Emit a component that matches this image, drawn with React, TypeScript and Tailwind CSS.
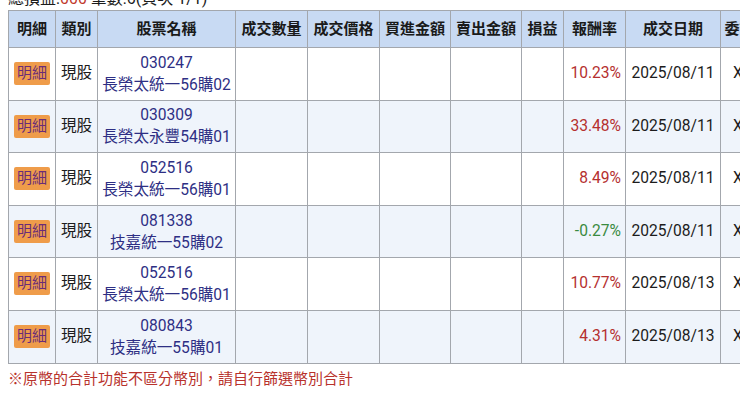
import React from 'react';

interface TradeRow {
  code: string;
  name: string;
  rate: string;
  date: string;
}

const rows: TradeRow[] = [
  { code: '030247', name: '長榮太統一56購02', rate: '10.23%', date: '2025/08/11' },
  { code: '030309', name: '長榮太永豐54購01', rate: '33.48%', date: '2025/08/11' },
  { code: '052516', name: '長榮太統一56購01', rate: '8.49%', date: '2025/08/11' },
  { code: '081338', name: '技嘉統一55購02', rate: '-0.27%', date: '2025/08/11' },
  { code: '052516', name: '長榮太統一56購01', rate: '10.77%', date: '2025/08/13' },
  { code: '080843', name: '技嘉統一55購01', rate: '4.31%', date: '2025/08/13' },
];

const headers = ['明細', '類別', '股票名稱', '成交數量', '成交價格', '買進金額', '賣出金額', '損益', '報酬率', '成交日期', '委託書號'];

export default function App() {
  return (
    <div
      className="w-[740px] h-[401px] overflow-hidden bg-white text-[#1c1c1c]"
      style={{ fontFamily: "Roboto, 'Noto Sans CJK TC', sans-serif" }}
    >
      <div className="pl-2 -mt-[11px] h-[21px] text-[16px] leading-[20px] whitespace-nowrap">
        總損益:<span className="text-[#c0392b]">000</span> 筆數:6(頁次 1/1)
      </div>

      <table className="ml-2 table-fixed border-collapse w-[780px] text-[15.6px]">
        <colgroup>
          <col className="w-[47px]" />
          <col className="w-[42px]" />
          <col className="w-[138px]" />
          <col className="w-[72px]" />
          <col className="w-[72px]" />
          <col className="w-[71px]" />
          <col className="w-[71px]" />
          <col className="w-[42px]" />
          <col className="w-[62px]" />
          <col className="w-[95px]" />
          <col className="w-[68px]" />
        </colgroup>
        <thead>
          <tr className="h-[37px] bg-[#c8daf3]">
            {headers.map((h) => (
              <th
                key={h}
                className="border border-[#a3a7ad] font-bold text-center text-[15px] px-0 whitespace-nowrap overflow-hidden text-[#1a1a1a]"
              >
                {h}
              </th>
            ))}
          </tr>
        </thead>
        <tbody>
          {rows.map((r, i) => (
            <tr key={i} className={`h-[52.6px] ${i % 2 === 1 ? 'bg-[#eff4fb]' : 'bg-white'}`}>
              <td className="border border-[#a3a7ad] text-center">
                <span className="inline-block bg-[#ef9c4a] text-[#6a2c78] text-[15px] leading-[23px] w-[36px] rounded-[2px]">
                  明細
                </span>
              </td>
              <td className="border border-[#a3a7ad] text-center">現股</td>
              <td className="border border-[#a3a7ad] text-center leading-[22px] text-[#2e2f84] whitespace-nowrap">
                <div>{r.code}</div>
                <div>{r.name}</div>
              </td>
              <td className="border border-[#a3a7ad]" />
              <td className="border border-[#a3a7ad]" />
              <td className="border border-[#a3a7ad]" />
              <td className="border border-[#a3a7ad]" />
              <td className="border border-[#a3a7ad]" />
              <td
                className={`border border-[#a3a7ad] text-right pr-[4px] ${
                  r.rate.startsWith('-') ? 'text-[#3a8a3f]' : 'text-[#b5302f]'
                }`}
              >
                {r.rate}
              </td>
              <td className="border border-[#a3a7ad] text-center">{r.date}</td>
              <td className="border border-[#a3a7ad] pl-[12px]">X</td>
            </tr>
          ))}
        </tbody>
      </table>

      <div className="pl-2 pt-[5px] text-[15px] leading-[20px] text-[#b8322c] whitespace-nowrap">
        ※原幣的合計功能不區分幣別，請自行篩選幣別合計
      </div>
    </div>
  );
}
